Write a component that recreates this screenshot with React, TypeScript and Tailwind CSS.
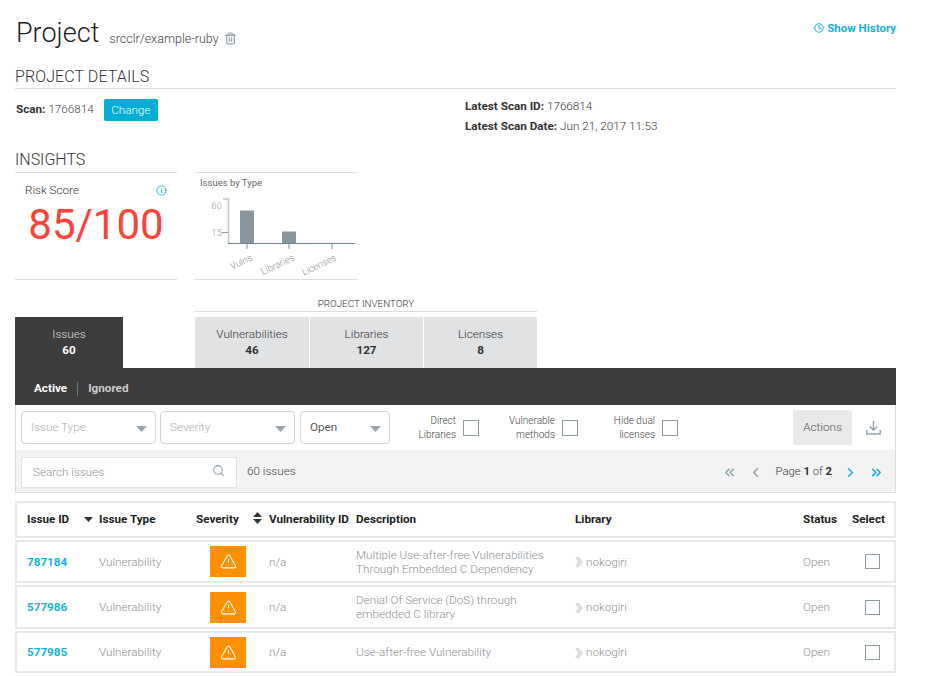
import { ChevronLeft, ChevronRight, ChevronsLeft, ChevronsRight, Clock, Info, Search, Trash2, TriangleAlert } from "lucide-react";
import React from "react";

const rows = [
  { id: "787184", desc: ["Multiple Use-after-free Vulnerabilities", "Through Embedded C Dependency"], h: "h-[43px]" },
  { id: "577986", desc: ["Denial Of Service (DoS) through", "embedded C library"], h: "h-[44px]" },
  { id: "577985", desc: ["Use-after-free Vulnerability"], h: "h-[42px]" },
];

const gridCols = "grid grid-cols-[72px_97px_73px_87px_219px_228px_49px_1fr] items-center";

const Caret = () => (
  <svg width="11" height="6" viewBox="0 0 11 6" className="absolute right-[8px] top-[14px]">
    <path d="M0 0h11L5.500 6z" fill="#9aa5ab" />
  </svg>
);

const Dropdown = ({ label, width, dark }: { label: string; width: string; dark?: boolean }) => (
  <div className={`relative flex h-[33px] items-center rounded-[4px] border border-[#cfd3d5] pl-[9px] text-[11.7px] ${width} ${dark ? "text-[#555]" : "font-light text-[#a9adb0]"}`}>
    {label}
    <Caret />
  </div>
);

const Toggle = ({ lines, width }: { lines: string[]; width: string }) => (
  <div className={`flex items-center justify-end gap-[7px] ${width}`}>
    <div className="text-right text-[10px] font-light leading-[14px] text-[#444]">
      {lines.map((l) => (
        <div key={l}>{l}</div>
      ))}
    </div>
    <div className="h-[16px] w-[16px] border border-[#8d9ba3]" />
  </div>
);

const Tab = ({ label, value, width }: { label: string; value: string; width: string }) => (
  <div className={`flex h-[51px] flex-col items-center bg-[#e1e2e4] pt-[10px] text-[#333] ${width}`}>
    <div className="text-[11.7px] font-light leading-[15px]">{label}</div>
    <div className="text-[11.7px] font-bold leading-[17px]">{value}</div>
  </div>
);

const Chart = () => (
  <svg width="162" height="88" viewBox="0 0 162 88" className="block">
    <path d="M29 9h5.500V53" fill="none" stroke="#bcc6cb" strokeWidth="1.500" />
    <path d="M28 42.500h6" stroke="#8a9aa3" strokeWidth="1" />
    <rect x="46" y="20.500" width="14" height="32.500" fill="#87969f" />
    <rect x="88" y="41.500" width="14" height="11.500" fill="#87969f" />
    <path d="M34 53.500h127" stroke="#6f838e" strokeWidth="1" />
    <path d="M53 54v5M95 54v5M138 54v5" stroke="#bcc6cb" strokeWidth="2" />
    <text x="28" y="19" textAnchor="end" fontSize="9.500" fill="#b8c1c6" fontFamily="Roboto">60</text>
    <text x="28" y="45.500" textAnchor="end" fontSize="9.500" fill="#b8c1c6" fontFamily="Roboto">15</text>
    <text transform="translate(59 70) rotate(-25)" textAnchor="end" fontSize="9.500" fontWeight="300" fill="#8b9296" fontFamily="Roboto">Vulns</text>
    <text transform="translate(101 70) rotate(-25)" textAnchor="end" fontSize="9.500" fontWeight="300" fill="#8b9296" fontFamily="Roboto">Libraries</text>
    <text transform="translate(143 70) rotate(-25)" textAnchor="end" fontSize="9.500" fontWeight="300" fill="#8b9296" fontFamily="Roboto">Licenses</text>
  </svg>
);

const App = () => {
  return (
    <div className="h-[676px] w-[927px] overflow-hidden bg-white pl-[15px] font-['Roboto',sans-serif] text-[#333]">
      <div className="w-[881px]">
        {/* title */}
        <div className="flex h-[67px] items-start justify-between pt-[15px]">
          <div className="flex items-end pl-px">
            <h1 className="text-[27px] font-light leading-[37px] text-[#222]">Project</h1>
            <span className="mb-[5px] ml-[10px] text-[12.500px] font-light leading-[16px] text-[#444]">srcclr/example-ruby</span>
            <Trash2 size={13} strokeWidth={2.500} className="mb-[7px] ml-[5px] text-[#9aa9b0]" />
          </div>
          <div className="flex items-center gap-[3px] pt-[6px] text-[11.500px] font-bold leading-[14px] text-[#12b2dc]">
            <Clock size={10} strokeWidth={2.500} />
            Show History
          </div>
        </div>

        {/* details */}
        <h2 className="border-b border-[#dcdcdc] pb-[2px] text-base font-light leading-[19px] tracking-[0.1px]">PROJECT DETAILS</h2>
        <div className="flex h-[61px] pt-[10px]">
          <div className="flex h-[22px] w-[450px] items-center pl-[1px] text-[11.7px]">
            <span className="font-bold">Scan:</span>
            <span className="ml-[3px] font-light text-[#444]">1766814</span>
            <span className="ml-[10px] flex h-[22px] w-[54px] items-center justify-center rounded-[2px] bg-[#00aed6] pt-px text-[11.7px] font-light text-white">Change</span>
          </div>
          <div className="-mt-[3px] text-[11.7px] leading-[20px]">
            <div>
              <span className="font-bold">Latest Scan ID:</span> <span className="font-light">1766814</span>
            </div>
            <div>
              <span className="font-bold">Latest Scan Date:</span> <span className="font-light">Jun 21, 2017 11:53</span>
            </div>
          </div>
        </div>

        {/* insights */}
        <h2 className="h-[22px] text-base font-light leading-[19px]">INSIGHTS</h2>
        <div className="flex gap-[18px]">
          <div className="h-[108px] w-[162px] border-y border-[#dcdcdc] px-[10px] pt-[10px]">
            <div className="flex items-center justify-between text-[11.7px] font-light leading-[14px] text-[#333]">
              Risk Score
              <Info size={11} className="text-[#12b2dc]" />
            </div>
            <div className="mt-[4px] text-center text-[42px] leading-[48px] text-[#f9423a]">85/100</div>
          </div>
          <div className="h-[108px] w-[162px] border-y border-[#dcdcdc] pl-[5px] pt-[4px]">
            <div className="h-[13px] text-[9.500px] leading-[12px] text-[#666]">Issues by Type</div>
            <div className="-ml-[6px]">
              <Chart />
            </div>
          </div>
        </div>

        {/* tabs */}
        <div className="mt-[18px] flex items-end">
          <div className="flex h-[51px] w-[108px] flex-col items-center bg-[#3d3d3d] pt-[10px] text-white">
            <div className="text-[11.7px] font-light leading-[15px] text-[#ddd]">Issues</div>
            <div className="text-[11.7px] font-bold leading-[17px]">60</div>
          </div>
          <div className="ml-[72px]">
            <div className="mb-[5px] border-b border-[#dcdce0] pb-[1px] text-center text-[9.800px] font-light leading-[12px] text-[#333]">PROJECT INVENTORY</div>
            <div className="flex gap-px">
              <Tab label="Vulnerabilities" value="46" width="w-[114px]" />
              <Tab label="Libraries" value="127" width="w-[113px]" />
              <Tab label="Licenses" value="8" width="w-[113px]" />
            </div>
          </div>
        </div>
        <div className="flex h-[37px] items-center bg-[#3d3d3d] pl-[19px] pt-[5px] text-[11.7px] font-bold text-white">
          <span>Active</span>
          <span className="mx-[10px] h-[14px] w-px bg-[#777]" />
          <span className="text-[#ccc]">Ignored</span>
        </div>

        {/* filters */}
        <div className="border-x border-b border-[#dcdcdc]">
          <div className="flex h-[45px] items-center pl-[5px]">
            <div className="flex gap-[4px]">
              <Dropdown label="Issue Type" width="w-[135px]" />
              <Dropdown label="Severity" width="w-[135px]" />
              <div className="ml-px">
                <Dropdown label="Open" width="w-[90px]" dark />
              </div>
            </div>
            <Toggle lines={["Direct", "Libraries"]} width="w-[89px]" />
            <Toggle lines={["Vulnerable", "methods"]} width="w-[99px]" />
            <Toggle lines={["Hide dual", "licenses"]} width="w-[100px]" />
            <div className="ml-[115px] flex h-[35px] w-[59px] items-center justify-center rounded-[2px] bg-[#e8e9ea] text-[11.7px] font-light text-[#555]">Actions</div>
            <svg width="15" height="15" viewBox="0 0 15 15" className="ml-[14px]" fill="none" stroke="#95a5ad" strokeWidth="1.500">
              <path d="M7.500 1v9M3.800 6.500l3.700 3.700 3.700-3.700M0.800 10v4h13.400v-4" />
            </svg>
          </div>
          <div className="flex h-[42px] items-center bg-[#f3f3f3] pl-[5px] pt-[2px]">
            <div className="flex h-[31px] w-[216px] items-center justify-between border border-[#e3e3e3] bg-white pl-[11px] pr-[11px] text-[11.7px] font-light text-[#8d9093]">
              <span className="pt-[2px]">Search issues</span>
              <Search size={13} className="mb-[3px] text-[#8fa0a8]" />
            </div>
            <span className="ml-[10px] text-[11.7px] font-light text-[#444]">60 issues</span>
            <div className="ml-auto flex items-center pr-[11px] font-light text-[#333]">
              <ChevronsLeft size={15} strokeWidth={2.500} className="text-[#8fa5b0]" />
              <ChevronLeft size={15} strokeWidth={2.500} className="ml-[11px] text-[#8fa5b0]" />
              <span className="ml-[13px] text-[11.300px]">
                Page <b className="font-bold">1</b> of <b className="font-bold">2</b>
              </span>
              <ChevronRight size={15} strokeWidth={2.500} className="ml-[11px] text-[#12b2dc]" />
              <ChevronsRight size={15} strokeWidth={2.500} className="ml-[11px] text-[#12b2dc]" />
            </div>
          </div>
        </div>

        {/* table */}
        <div className={`mt-[8px] h-[37px] border-2 border-[#e8e8e8] pl-[10px] text-[11.7px] font-bold text-[#222] ${gridCols}`}>
          <div className="relative">
            Issue ID
            <svg width="9" height="5" viewBox="0 0 9 5" className="absolute left-[57px] top-[6px]">
              <path d="M0 0h9L4.500 5z" fill="#333" />
            </svg>
          </div>
          <div>Issue Type</div>
          <div className="relative">
            Severity
            <svg width="9" height="12" viewBox="0 0 9 12" className="absolute left-[57px] top-[1px]">
              <path d="M0 5h9L4.500 0zM0 7h9L4.500 12z" fill="#333" />
            </svg>
          </div>
          <div>Vulnerability ID</div>
          <div>Description</div>
          <div>Library</div>
          <div>Status</div>
          <div>Select</div>
        </div>
        <div className="mt-[2px] flex flex-col gap-[2px]">
          {rows.map((r) => (
            <div key={r.id} className={`border-2 border-[#e8e8e8] pl-[10px] text-[11.7px] font-light text-[#8d9093] ${r.h} ${gridCols}`}>
              <div className="pt-[2px] font-bold text-[#12b2dc]">{r.id}</div>
              <div className="pt-[2px]">Vulnerability</div>
              <div className="pl-[14px]">
                <div className="flex h-[31px] w-[36px] items-center justify-center bg-[#ff9100]">
                  <TriangleAlert size={17} strokeWidth={1.500} className="text-white" />
                </div>
              </div>
              <div className="pt-[2px]">n/a</div>
              <div className="leading-[14px]">
                {r.desc.map((d) => (
                  <div key={d}>{d}</div>
                ))}
              </div>
              <div className="flex items-center gap-[3px] pt-[2px]">
                <svg width="8" height="10" viewBox="0 0 8 10">
                  <path d="M0 0h4l4 5-4 5H0l3-5z" fill="#dcdcdc" />
                </svg>
                nokogiri
              </div>
              <div className="pt-[2px]">Open</div>
              <div className="pl-[13px]">
                <div className="h-[15px] w-[15px] border border-[#8d9ba3]" />
              </div>
            </div>
          ))}
        </div>
      </div>
    </div>
  );
};

export default App;
